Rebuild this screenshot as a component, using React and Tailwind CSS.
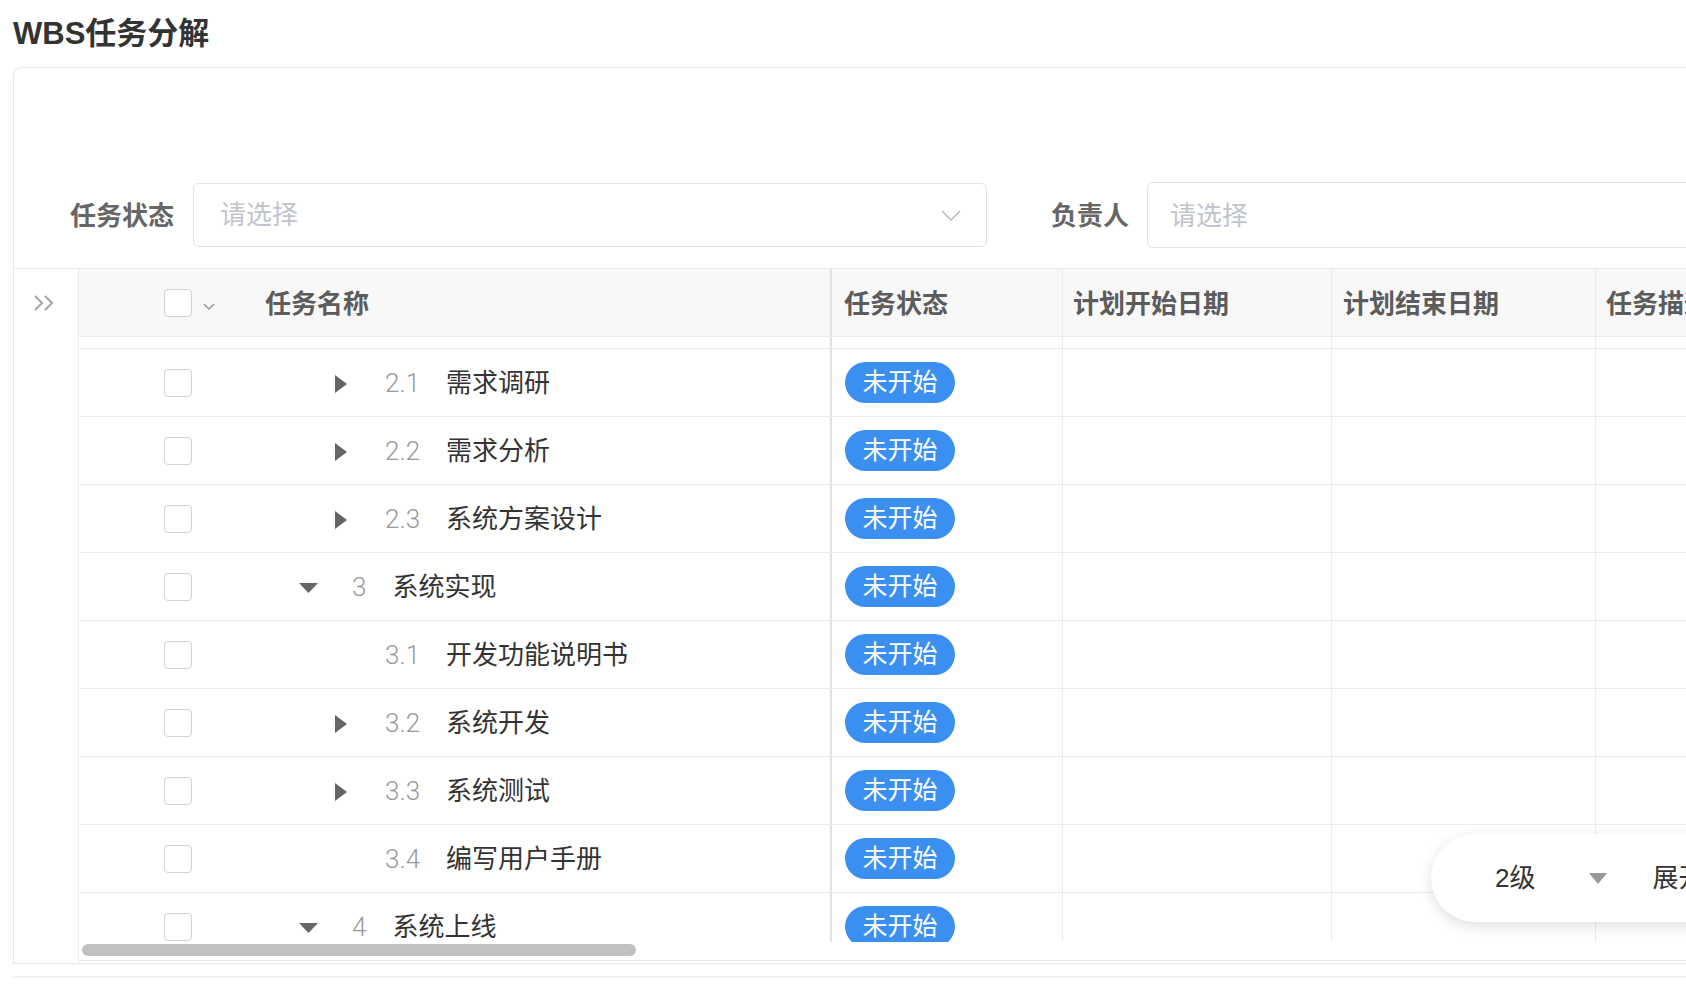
import React from 'react';

const rows = [
  { no: '2.1', name: '需求调研', level: 2, toggle: 'right' },
  { no: '2.2', name: '需求分析', level: 2, toggle: 'right' },
  { no: '2.3', name: '系统方案设计', level: 2, toggle: 'right' },
  { no: '3', name: '系统实现', level: 1, toggle: 'down' },
  { no: '3.1', name: '开发功能说明书', level: 2, toggle: null },
  { no: '3.2', name: '系统开发', level: 2, toggle: 'right' },
  { no: '3.3', name: '系统测试', level: 2, toggle: 'right' },
  { no: '3.4', name: '编写用户手册', level: 2, toggle: null },
  { no: '4', name: '系统上线', level: 1, toggle: 'down' },
];

const Checkbox = () => (
  <span className="block w-[28px] h-[28px] shrink-0 rounded-[4px] border-[1.5px] border-[#d2d2d2] bg-white" />
);

const Toggle = ({ type }) => (
  <span className="flex w-[24px] h-[24px] shrink-0 items-center justify-center">
    {type === 'right' && (
      <svg width="12" height="18" viewBox="0 0 12 18">
        <path d="M0 0 L12 9 L0 18 Z" fill="#666" />
      </svg>
    )}
    {type === 'down' && (
      <svg width="19" height="10" viewBox="0 0 19 10">
        <path d="M0 0 L19 0 L9.5 10 Z" fill="#666" />
      </svg>
    )}
  </span>
);

const Cells = ({ children, h }) => (
  <div className={`flex ${h} border-b border-[#ececec]`}>
    {children}
  </div>
);

export default function App() {
  return (
    <div className="relative w-[1686px] h-[1004px] overflow-hidden bg-white font-['Liberation_Sans','Noto_Sans_CJK_SC',sans-serif]">
      <div className="pl-[13px] pt-[14px]">
        <h1 className="text-[31px] leading-[40px] font-bold text-[#333]">WBS任务分解</h1>
      </div>

      {/* card */}
      <div className="ml-[13px] mt-[13px] w-[2000px] rounded-tl-[8px] border-t border-l border-b border-[#e8e8e8]">
        <div className="h-[115px]" />

        {/* filters */}
        <div className="flex items-center h-[64px]">
          <span className="ml-[56px] pt-[2px] text-[26px] font-semibold text-[#666]">任务状态</span>
          <div className="ml-[19px] flex items-center justify-between w-[794px] h-[64px] rounded-[6px] border border-[#e3e3e3] pl-[26px] pr-[25px]">
            <span className="text-[26px] text-[#c0c4cc]">请选择</span>
            <svg width="20" height="11" viewBox="0 0 20 11">
              <polyline points="1,1 10,10 19,1" fill="none" stroke="#bfbfbf" strokeWidth="1.6" />
            </svg>
          </div>
          <span className="ml-[64px] pt-[2px] text-[26px] font-semibold text-[#666]">负责人</span>
          <div className="ml-[18px] flex items-center w-[700px] h-[66px] rounded-[6px] border border-[#e3e3e3] pl-[22px]">
            <span className="pt-[2px] text-[26px] text-[#c0c4cc]">请选择</span>
          </div>
        </div>

        {/* table */}
        <div className="mt-[21px] flex border-t border-[#e8e8e8]">
          {/* left rail */}
          <div className="w-[65px] shrink-0 border-r border-[#ececec]">
            <div className="flex h-[68px] items-center pl-[19px]">
              <svg width="22" height="18" viewBox="0 0 22 18">
                <path d="M2 2 L9 9 L2 16 M12 2 L19 9 L12 16" fill="none" stroke="#aaa" strokeWidth="2.2" />
              </svg>
            </div>
          </div>

          <div className="flex-1 border-b border-[#e8e8e8]">
            {/* header */}
            <Cells h="h-[68px] bg-[#f8f8f8]">
              <div className="w-[753px] shrink-0 flex items-center pl-[85px] border-r-2 border-[#e2e2e2]">
                <Checkbox />
                <svg className="ml-[11px] mt-[8px]" width="12" height="8" viewBox="0 0 12 8">
                  <polyline points="1,1 6,6 11,1" fill="none" stroke="#999" strokeWidth="1.5" />
                </svg>
                <span className="ml-[50px] pt-[3px] text-[26px] font-semibold text-[#5c5c5c]">任务名称</span>
              </div>
              <div className="w-[231px] shrink-0 flex items-center pt-[3px] pl-[12px] border-r border-[#ececec] text-[26px] font-semibold text-[#5c5c5c]">任务状态</div>
              <div className="w-[269px] shrink-0 flex items-center pt-[3px] pl-[10px] border-r border-[#ececec] text-[26px] font-semibold text-[#5c5c5c]">计划开始日期</div>
              <div className="w-[264px] shrink-0 flex items-center pt-[3px] pl-[11px] border-r border-[#ececec] text-[26px] font-semibold text-[#5c5c5c]">计划结束日期</div>
              <div className="w-[300px] shrink-0 flex items-center pt-[3px] pl-[10px] text-[26px] font-semibold text-[#5c5c5c]">任务描述</div>
            </Cells>

            {/* body */}
            <div className="h-[605px] overflow-hidden">
              <Cells h="h-[12px]">
                <div className="w-[753px] shrink-0 border-r-2 border-[#e2e2e2]" />
                <div className="w-[231px] shrink-0 border-r border-[#ececec]" />
                <div className="w-[269px] shrink-0 border-r border-[#ececec]" />
                <div className="w-[264px] shrink-0 border-r border-[#ececec]" />
              </Cells>
              {rows.map((r) => (
                <Cells key={r.no} h="h-[68px]">
                  <div className="w-[753px] shrink-0 flex items-center pl-[85px] border-r-2 border-[#e2e2e2]">
                    <Checkbox />
                    <div className={`flex items-center pt-[2px] ${r.level === 1 ? 'ml-[104px]' : 'ml-[137px]'}`}>
                      <Toggle type={r.toggle} />
                      <span className="ml-[32px] font-['Roboto',sans-serif] font-light text-[26px] text-[#9a9a9a]">{r.no}</span>
                      <span className="ml-[26px] text-[26px] text-[#333]">{r.name}</span>
                    </div>
                  </div>
                  <div className="w-[231px] shrink-0 flex items-center pl-[13px] border-r border-[#ececec]">
                    <span className="flex items-center justify-center w-[110px] h-[41px] rounded-full bg-[#3b8ff0] text-[25px] text-white">未开始</span>
                  </div>
                  <div className="w-[269px] shrink-0 border-r border-[#ececec]" />
                  <div className="w-[264px] shrink-0 border-r border-[#ececec]" />
                  <div className="w-[300px] shrink-0" />
                </Cells>
              ))}
            </div>

            {/* scrollbar */}
            <div className="h-[18px] pt-[2px] pl-[3px]">
              <div className="h-[12px] w-[554px] rounded-full bg-[#c1c1c1]" />
            </div>
          </div>
        </div>
        <div className="h-[2px]" />
      </div>

      <div className="ml-[13px] mt-[12px] h-[2px] w-[2000px] bg-[#f2f2f2]" />

      {/* level switcher */}
      <div className="absolute left-[1431px] top-[834px] flex items-center h-[88px] w-[400px] rounded-full bg-white pl-[64px] shadow-[0_4px_14px_rgba(0,0,0,0.13)]">
        <span className="text-[26px] text-[#333]">2级</span>
        <svg className="ml-[54px]" width="18" height="11" viewBox="0 0 18 11">
          <path d="M0 0 L18 0 L9 11 Z" fill="#999" />
        </svg>
        <span className="ml-[45px] text-[26px] text-[#333]">展开</span>
      </div>
    </div>
  );
}
